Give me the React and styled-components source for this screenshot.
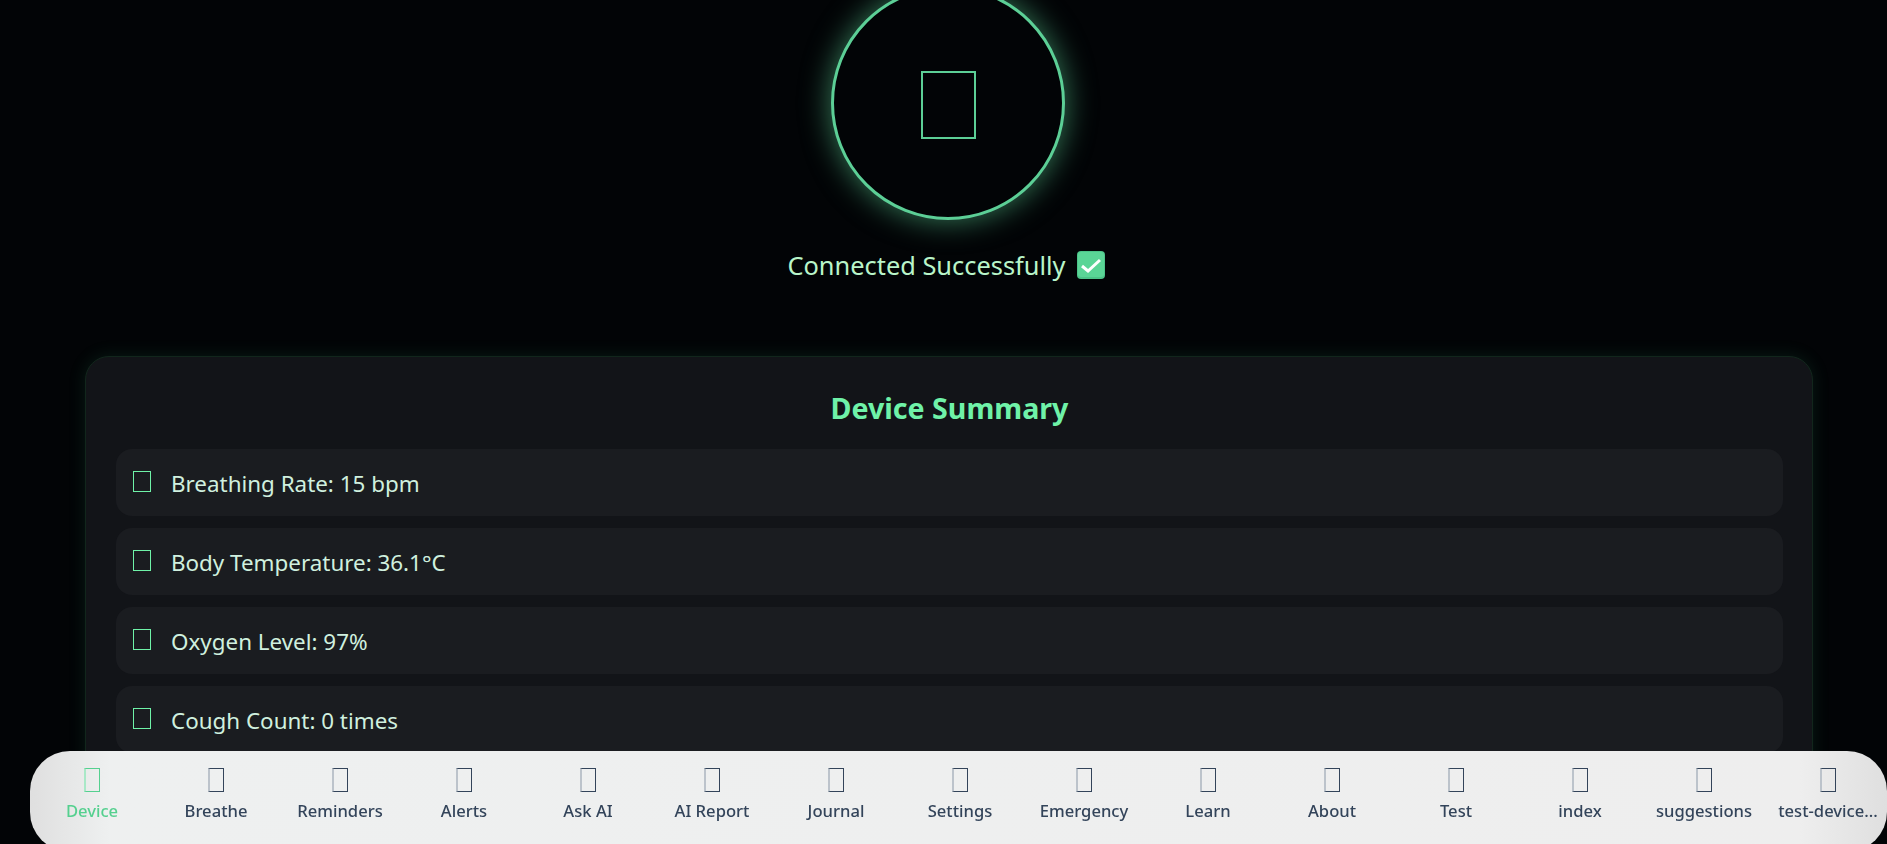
import React from 'react'
import styled, { createGlobalStyle } from 'styled-components'

const GlobalStyle = createGlobalStyle`
  html, body {
    margin: 0;
    height: 100%;
    overflow: hidden;
    background: #020406;
    font-family: "Noto Sans", "Open Sans", sans-serif;
  }
`

const Page = styled.div`
  height: 844px;
  overflow: hidden;
  display: flex;
  flex-direction: column;
  align-items: center;
  padding: 0 74px 0 85px;
  box-sizing: border-box;
`

const Circle = styled.div`
  flex: none;
  width: 234px;
  height: 234px;
  margin-top: -14px;
  margin-left: -2px;
  box-sizing: border-box;
  padding-top: 3px;
  border: 3px solid #5ccf96;
  border-radius: 50%;
  background: #020406;
  box-shadow: 0 0 30px rgba(92, 207, 150, 0.6);
  display: flex;
  align-items: center;
  justify-content: center;
`

const Missing = styled.span`
  display: block;
  flex: none;
  box-sizing: border-box;
  width: ${p => p.$w}px;
  height: ${p => p.$h}px;
  border: ${p => p.$stroke || 1}px solid ${p => p.$color};
`

const NavIcon = styled(Missing)`
  border-left: 2px solid ${p => p.$soft};
`

const Status = styled.div`
  display: flex;
  align-items: center;
  gap: 11px;
  margin-top: 28px;
  margin-left: -6px;
  height: 34px;
  font-size: 25.4px;
  color: #b9f5c9;
`

const Card = styled.section`
  flex: none;
  width: 100%;
  margin-top: 74px;
  padding: 32px 29px 120px 30px;
  box-sizing: border-box;
  background: #121418;
  border: 1px solid #12261c;
  border-radius: 24px;
  box-shadow: 0 0 18px rgba(60, 180, 120, 0.14);
`

const Title = styled.h2`
  margin: 0 0 22px;
  text-align: center;
  font-size: 28.6px;
  line-height: 38px;
  font-weight: 700;
  color: #6ff2a8;
`

const Rows = styled.div`
  display: flex;
  flex-direction: column;
  gap: 12px;
`

const Row = styled.div`
  height: 67px;
  padding: 0 17px;
  box-sizing: border-box;
  display: flex;
  align-items: center;
  gap: 20px;
  background: #1a1c20;
  border-radius: 16px;
  font-size: 22.4px;
  color: #d0f0df;
`

const RowIcon = styled(Missing)`
  margin-top: -3px;
`

const RowText = styled.span`
  padding-top: 2px;
`

const Nav = styled.nav`
  position: fixed;
  left: 30px;
  top: 751px;
  width: 1857px;
  height: 101px;
  display: flex;
  background: linear-gradient(90deg, #dfdfdf 0, #eef0f0 80px, #eeeeee 1770px, #dfdfdf 100%);
  border-radius: 40px;
  overflow: hidden;
`

const Tab = styled.div`
  flex: none;
  width: 124px;
  padding-top: 17px;
  display: flex;
  flex-direction: column;
  align-items: center;
  gap: 8px;
  color: ${p => (p.$active ? '#55d08f' : '#33445a')};
`

const TabLabel = styled.span`
  font-size: 16.6px;
  line-height: 22px;
  font-weight: 500;
  white-space: nowrap;
`

const summary = ['Breathing Rate: 15 bpm', 'Body Temperature: 36.1°C', 'Oxygen Level: 97%', 'Cough Count: 0 times']
const tabs = ['Device', 'Breathe', 'Reminders', 'Alerts', 'Ask AI', 'AI Report', 'Journal', 'Settings', 'Emergency', 'Learn', 'About', 'Test', 'index', 'suggestions', 'test-device...']

const CheckEmoji = () => (
  <svg width="28" height="28" viewBox="0 0 28 28">
    <rect width="28" height="28" rx="4" fill="#4cc488" />
    <rect x="1" y="1" width="26" height="25" rx="3" fill="#5ad596" />
    <path d="M5 15l6 5 12-11" fill="none" stroke="#fff" strokeWidth="3" />
  </svg>
)

const App = () => {
  return (
    <>
      <GlobalStyle />
      <Page>
        <Circle>
          <Missing $w={55} $h={68} $stroke={2} $color="#5ccf96" />
        </Circle>
        <Status>
          <span>Connected Successfully</span>
          <CheckEmoji />
        </Status>
        <Card>
          <Title>Device Summary</Title>
          <Rows>
            {summary.map(text => (
              <Row key={text}>
                <RowIcon $w={18} $h={21} $color="#6ff2a8" />
                <RowText>{text}</RowText>
              </Row>
            ))}
          </Rows>
        </Card>
      </Page>
      <Nav>
        {tabs.map((label, i) => (
          <Tab key={label} $active={i === 0}>
            <NavIcon
              $w={16}
              $h={24}
              $color={i === 0 ? '#55d08f' : '#33445a'}
              $soft={i === 0 ? '#a9e8c7' : '#bcc3cb'}
            />
            <TabLabel>{label}</TabLabel>
          </Tab>
        ))}
      </Nav>
    </>
  )
}

export default App
